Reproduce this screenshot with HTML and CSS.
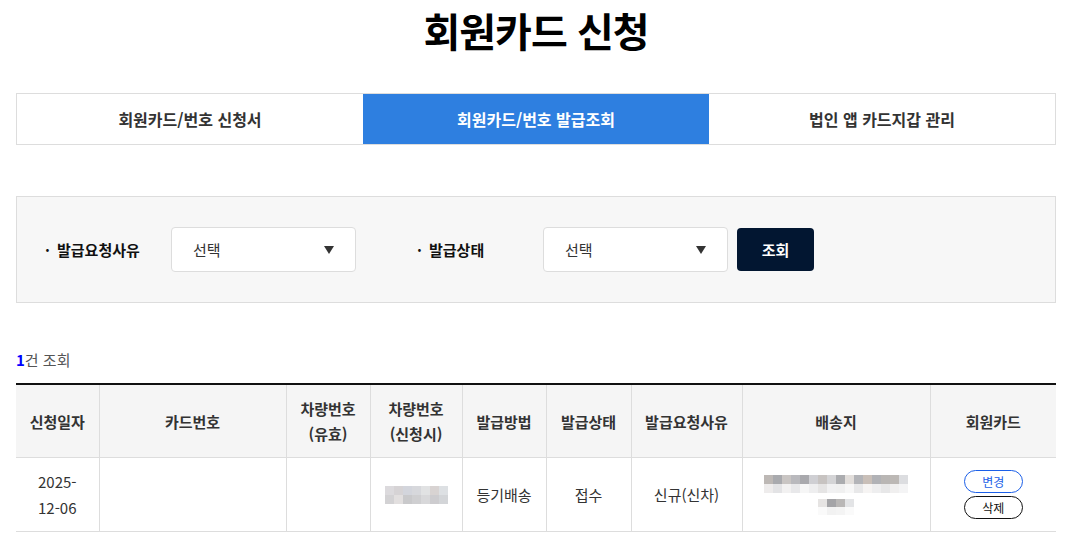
FILE: index.html
```html
<!DOCTYPE html>
<html lang="ko">
<head>
    <meta charset="UTF-8">
    <meta name="viewport" content="width=device-width, initial-scale=1.0">
    <title>회원카드 신청</title>
    <link rel="stylesheet" href="styles.css">
</head>
<body>
    <div class="wrap">
        <h1 class="page-title">회원카드 신청</h1>

        <ul class="tabs">
            <li class="tab">회원카드/번호 신청서</li>
            <li class="tab active">회원카드/번호 발급조회</li>
            <li class="tab">법인 앱 카드지갑 관리</li>
        </ul>

        <div class="search-box">
            <div class="search-item">
                <span class="search-label">발급요청사유</span>
                <div class="select-box">
                    <span>선택</span>
                    <span class="arrow"></span>
                </div>
            </div>
            <div class="search-item second">
                <span class="search-label">발급상태</span>
                <div class="select-box">
                    <span>선택</span>
                    <span class="arrow"></span>
                </div>
            </div>
            <button type="button" class="btn-search">조회</button>
        </div>

        <p class="result-count"><strong>1</strong>건 조회</p>

        <table class="list-table">
            <colgroup>
                <col style="width:83px">
                <col style="width:187px">
                <col style="width:84px">
                <col style="width:92px">
                <col style="width:84px">
                <col style="width:85px">
                <col style="width:111px">
                <col style="width:188px">
                <col>
            </colgroup>
            <thead>
                <tr>
                    <th>신청일자</th>
                    <th>카드번호</th>
                    <th>차량번호<br>(유효)</th>
                    <th>차량번호<br>(신청시)</th>
                    <th>발급방법</th>
                    <th>발급상태</th>
                    <th>발급요청사유</th>
                    <th>배송지</th>
                    <th>회원카드</th>
                </tr>
            </thead>
            <tbody>
                <tr>
                    <td>2025-<br>12-06</td>
                    <td></td>
                    <td></td>
                    <td>
                        <div class="masked car">
                            <i style="background:#dcdadd"></i><i style="background:#d6d3d5"></i><i style="background:#d3d5dc"></i><i style="background:#d7d8dc"></i><i style="background:#e1e2e3"></i><i style="background:#d8d3d2"></i><i style="background:#dde0e3"></i>
                            <i style="background:#d3d2d4"></i><i style="background:#e2dfdf"></i><i style="background:#c9c9cb"></i><i style="background:#cfcfd1"></i><i style="background:#d8d8da"></i><i style="background:#cdcccf"></i><i style="background:#d3d5d8"></i>
                        </div>
                    </td>
                    <td>등기배송</td>
                    <td>접수</td>
                    <td>신규(신차)</td>
                    <td>
                        <div class="masked addr">
                            <i style="background:#bdb8b5"></i><i style="background:#a9aaae"></i><i style="background:#c9c5c3"></i><i style="background:#b9b9bd"></i><i style="background:#a9a9ad"></i><i style="background:#cfcfd3"></i><i style="background:#c7c3c1"></i><i style="background:#d4d4d6"></i><i style="background:#abacaf"></i><i style="background:#e2dedb"></i><i style="background:#b3b4b8"></i><i style="background:#c9bfb8"></i><i style="background:#b1b2b6"></i><i style="background:#b9b6b4"></i><i style="background:#bcb8b5"></i><i style="background:#dcdde0"></i>
                            <i style="background:#eeecec"></i><i style="background:#e3e3e5"></i><i style="background:#f2f1f1"></i><i style="background:#e8e8ea"></i><i style="background:#f6f6f6"></i><i style="background:#eeeeef"></i><i style="background:#e5e4e4"></i><i style="background:#f1f1f2"></i><i style="background:#f0f0f0"></i><i style="background:#f7f7f7"></i><i style="background:#e8e8e9"></i><i style="background:#f6f4f3"></i><i style="background:#eeeeef"></i><i style="background:#e7e7e8"></i><i style="background:#f0efef"></i><i style="background:#f4f4f5"></i>
                        </div>
                        <div class="masked addr2">
                            <i style="background:#e6e4e3"></i><i style="background:#a4a4a7"></i><i style="background:#b9b7b6"></i><i style="background:#e3e4e6"></i>
                            <i style="background:#fafafa"></i><i style="background:#f2f2f2"></i><i style="background:#f4f4f4"></i><i style="background:#fafafa"></i>
                        </div>
                    </td>
                    <td>
                        <div class="btn-group">
                            <button type="button" class="btn-sm blue">변경</button>
                            <button type="button" class="btn-sm">삭제</button>
                        </div>
                    </td>
                </tr>
            </tbody>
        </table>
    </div>
</body>
</html>
```

FILE: styles.css
```css
/* 기본 */
body {
    margin: 0;
    font-family: "Noto Sans CJK KR", "Noto Sans", sans-serif;
    color: #333;
    background: #fff;
}

.wrap {
    width: 1040px;
    margin-left: 16px;
}

.page-title {
    margin: 0;
    padding-top: 2px;
    height: 91px;
    font-size: 40px;
    line-height: 56px;
    font-weight: 700;
    color: #000;
    text-align: center;
    letter-spacing: -1px;
}

/* 탭 */
.tabs {
    display: flex;
    margin: 0;
    padding: 0;
    list-style: none;
    border: 1px solid #ddd;
}
.tab {
    flex: 1;
    height: 50px;
    line-height: 50px;
    text-align: center;
    font-size: 16px;
    font-weight: 700;
    color: #333;
}
.tab.active {
    background-color: #2e7fe0;
    color: #fff;
}

/* 검색 */
.search-box {
    display: flex;
    align-items: center;
    margin-top: 51px;
    height: 105px;
    padding: 0 0 0 28px;
    background-color: #f7f7f7;
    border: 1px solid #ddd;
}
.search-item {
    display: flex;
    align-items: center;
}
.search-item.second {
    margin-left: 61px;
}
.search-label {
    font-size: 15px;
    font-weight: 700;
    color: #111;
    width: 126px;
}
.search-label::before {
    content: "·";
    display: inline-block;
    width: 12px;
    font-weight: 700;
}
.select-box {
    display: flex;
    align-items: center;
    justify-content: space-between;
    box-sizing: border-box;
    width: 185px;
    height: 45px;
    padding: 0 21px 0 21px;
    background: #fff;
    border: 1px solid #ddd;
    border-radius: 4px;
    font-size: 15px;
    color: #333;
}
.arrow {
    width: 0;
    height: 0;
    border-left: 5px solid transparent;
    border-right: 5px solid transparent;
    border-top: 8px solid #333;
}
.btn-search {
    margin-left: 9px;
    width: 77px;
    height: 43px;
    border: none;
    border-radius: 4px;
    background-color: #021631;
    color: #fff;
    font-family: inherit;
    font-size: 15px;
    font-weight: 700;
}

/* 결과 */
.result-count {
    margin: 46px 0 12px;
    font-size: 15px;
    line-height: 22px;
    color: #555;
}
.result-count strong {
    color: #0000ff;
}

.list-table {
    width: 100%;
    table-layout: fixed;
    border-collapse: collapse;
    border-top: 2px solid #111;
    font-size: 15px;
}
.list-table th,
.list-table td {
    border: 1px solid #ddd;
    border-top: none;
    text-align: center;
    line-height: 25px;
    padding: 0 4px;
}
.list-table th:first-child,
.list-table td:first-child {
    border-left: none;
}
.list-table th:last-child,
.list-table td:last-child {
    border-right: none;
}
.list-table th {
    height: 72px;
    background-color: #f5f5f5;
    font-weight: 700;
    color: #333;
}
.list-table td {
    height: 73px;
    line-height: 26px;
    color: #333;
}

/* 가림 처리 */
.masked {
    display: grid;
    margin: 0 auto;
}
.masked i {
    display: block;
}
.masked.car {
    grid-template-columns: repeat(7, 9px);
    grid-auto-rows: 9px;
    width: 63px;
    padding: 0 10px;
    box-shadow: 0 0 0 5px #fff;
}
.masked.addr {
    grid-template-columns: repeat(16, 9px);
    grid-auto-rows: 9px;
    width: 144px;
}
.masked.addr2 {
    grid-template-columns: repeat(4, 9px);
    grid-auto-rows: 8px;
    width: 36px;
    margin-top: 6px;
}

/* 버튼 */
.btn-group {
    display: flex;
    flex-direction: column;
    align-items: center;
    gap: 3px;
}
.btn-sm {
    width: 59px;
    height: 23px;
    padding: 0;
    border: 1px solid #111;
    border-radius: 12px;
    background: #fff;
    font-family: inherit;
    font-size: 12px;
    color: #111;
}
.btn-sm.blue {
    border-color: #1b5fe8;
    color: #1b5fe8;
}
```
